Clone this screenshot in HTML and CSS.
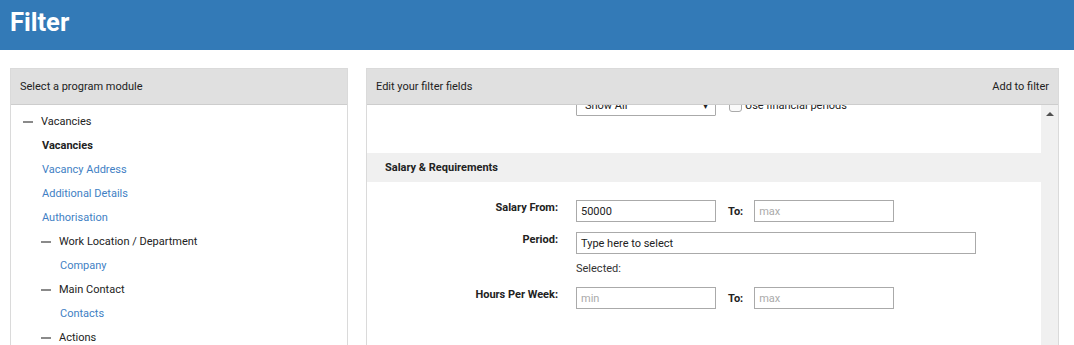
FILE: index.html
```html
<!DOCTYPE html>
<html lang="en">
<head>
<meta charset="utf-8">
<title>Filter</title>
<link rel="stylesheet" href="styles.css">
</head>
<body>
<header class="topbar"><h1 class="title">Filter</h1></header>
<main class="layout">
  <section class="panel panel-modules">
    <div class="panel-head">Select a program module</div>
    <ul class="tree">
      <li class="node group"><span class="dash"></span><span class="node-text">Vacancies</span></li>
      <li class="node item l1 active">Vacancies</li>
      <li class="node item l1"><a class="link">Vacancy Address</a></li>
      <li class="node item l1"><a class="link">Additional Details</a></li>
      <li class="node item l1"><a class="link">Authorisation</a></li>
      <li class="node group l1"><span class="dash"></span><span class="node-text">Work Location / Department</span></li>
      <li class="node item l2"><a class="link">Company</a></li>
      <li class="node group l1"><span class="dash"></span><span class="node-text">Main Contact</span></li>
      <li class="node item l2"><a class="link">Contacts</a></li>
      <li class="node group l1"><span class="dash"></span><span class="node-text">Actions</span></li>
    </ul>
  </section>
  <section class="panel panel-fields">
    <div class="panel-head split"><span>Edit your filter fields</span><span>Add to filter</span></div>
    <div class="panel-body">
      <div class="scroll-content">
        <div class="form-grid first-row">
          <label class="field-label">Closing Month:</label>
          <div class="field-line">
            <div class="select-box"><span>Show All</span><span class="caret">▾</span></div>
            <span class="checkbox"></span><span class="check-text">Use financial periods</span>
          </div>
        </div>
        <div class="section-head">Salary &amp; Requirements</div>
        <div class="form-grid fields">
          <label class="field-label">Salary From:</label>
          <div class="field-line">
            <div class="text-input">50000</div>
            <span class="to-label">To:</span>
            <div class="text-input placeholder">max</div>
          </div>
          <label class="field-label">Period:</label>
          <div class="field-stack">
            <div class="text-input wide">Type here to select</div>
            <div class="selected-note">Selected:</div>
          </div>
          <label class="field-label">Hours Per Week:</label>
          <div class="field-line">
            <div class="text-input placeholder">min</div>
            <span class="to-label">To:</span>
            <div class="text-input placeholder">max</div>
          </div>
        </div>
      </div>
      <div class="scrollbar"><span class="arrow-up"></span></div>
    </div>
  </section>
</main>
</body>
</html>
```

FILE: styles.css
```css
* { box-sizing: border-box; }
html, body { margin: 0; padding: 0; }
body {
  width: 1074px;
  height: 345px;
  overflow: hidden;
  background: #fff;
  font-family: Roboto, "Liberation Sans", Arial, sans-serif;
  font-size: 11px;
  color: #333;
}
.topbar {
  height: 50px;
  background: #337ab7;
  padding: 0 10px;
  display: flex;
  align-items: center;
}
.title {
  margin: 0;
  color: #fff;
  font-size: 25.5px;
  font-weight: 700;
  line-height: 1;
  margin-top: -5px;
}
.layout {
  display: flex;
  gap: 18px;
  padding: 18px 15px 0 10px;
}
.panel {
  border: 1px solid #dadada;
  height: 320px;
  background: #fff;
  display: flex;
  flex-direction: column;
}
.panel-modules { width: 338px; flex: none; }
.panel-fields { flex: 1; }
.panel-head {
  height: 36px;
  background: #e0e0e0;
  border-bottom: 1px solid #cdcdcd;
  padding: 0 9px 0 9px;
  display: flex;
  align-items: center;
  color: #222;
  flex: none;
}
.panel-head.split { justify-content: space-between; }
.tree {
  list-style: none;
  margin: 0;
  padding: 5px 0 0 12px;
}
.node {
  height: 24px;
  display: flex;
  align-items: center;
  line-height: 24px;
}
.l1 { padding-left: 18px; }
.l2 { padding-left: 37px; }
.item.l1 { padding-left: 19px; }
.dash {
  width: 10px;
  height: 2px;
  background: #8a8a8a;
  margin-right: 8px;
  flex: none;
}
.node-text { color: #222; }
.active { font-weight: 700; color: #222; }
.link { color: #3f7fc4; text-decoration: none; }
.panel-body {
  flex: 1;
  display: flex;
  overflow: hidden;
}
.scroll-content {
  flex: 1;
  overflow: hidden;
}
.scrollbar {
  width: 17px;
  flex: none;
  background: #f0f0f0;
  display: flex;
  justify-content: center;
  padding-top: 7px;
}
.arrow-up {
  width: 0;
  height: 0;
  border-left: 4px solid transparent;
  border-right: 4px solid transparent;
  border-bottom: 4px solid #505050;
}
.form-grid {
  display: grid;
  grid-template-columns: 191px auto;
  column-gap: 18px;
  row-gap: 10px;
  align-items: start;
}
.first-row { margin-top: -11px; }
.field-label {
  text-align: right;
  font-weight: 700;
  color: #222;
  line-height: 16px;
}
.first-row .field-label { margin-top: -2px; }
.field-line {
  display: flex;
  align-items: center;
}
.select-box {
  width: 140px;
  height: 22px;
  border: 1px solid #aaa;
  border-radius: 1px;
  display: flex;
  align-items: center;
  justify-content: space-between;
  padding: 0 7px 0 8px;
  color: #222;
}
.caret { font-size: 10px; color: #222; }
.checkbox {
  width: 13px;
  height: 13px;
  border: 1px solid #aaa;
  border-radius: 3px;
  margin-left: 13px;
  margin-right: 3px;
  background: #fafafa;
}
.check-text { color: #222; }
.section-head {
  margin-top: 37px;
  height: 29px;
  background: #f0f0f0;
  padding-left: 18px;
  display: flex;
  align-items: center;
  font-weight: 700;
  font-size: 11px;
  color: #222;
}
.fields { margin-top: 18px; }
.text-input {
  width: 140px;
  height: 22px;
  border: 1px solid #aaa;
  padding: 0 4px;
  display: flex;
  align-items: center;
  color: #222;
}
.text-input.wide { width: 400px; }
.text-input.placeholder { color: #aaa; }
.to-label {
  font-weight: 700;
  color: #222;
  margin: 0 11px 0 12px;
}
.field-stack {
  display: flex;
  flex-direction: column;
}
.selected-note {
  margin-top: 7px;
  line-height: 16px;
  color: #333;
}
```
